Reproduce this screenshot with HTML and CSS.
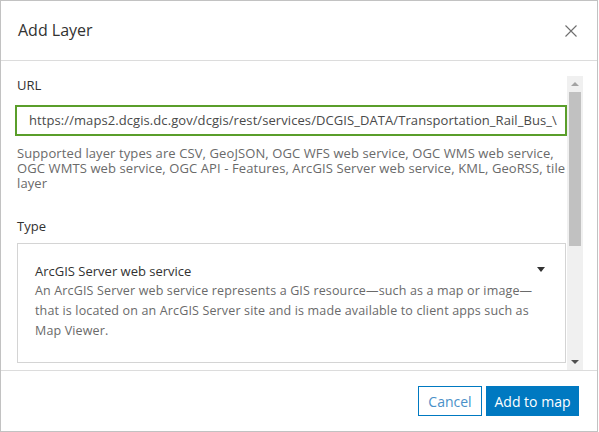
FILE: index.html
```html
<!DOCTYPE html>
<html>
<head>
<meta charset="utf-8">
<link rel="stylesheet" href="styles.css">
</head>
<body>
<div class="dialog">
  <div class="header">
    <h1 class="title">Add Layer</h1>
    <svg class="close" width="12" height="12" viewBox="0 0 12 12"><path d="M0.5 0.5 L11.5 11.5 M11.5 0.5 L0.5 11.5" stroke="#6e6e6e" stroke-width="1.1" fill="none"/></svg>
  </div>
  <div class="body">
    <div class="content">
      <div class="label">URL</div>
      <div class="input">https://maps2.dcgis.dc.gov/dcgis/rest/services/DCGIS_DATA/Transportation_Rail_Bus_\</div>
      <p class="hint">Supported layer types are CSV, GeoJSON, OGC WFS web service, OGC WMS web service, OGC WMTS web service, OGC API - Features, ArcGIS Server web service, KML, GeoRSS, tile layer</p>
      <div class="label type-label">Type</div>
      <div class="select">
        <div class="select-head">
          <span class="select-title">ArcGIS Server web service</span>
          <span class="caret"></span>
        </div>
        <p class="select-desc">An ArcGIS Server web service represents a GIS resource—such as a map or image—that is located on an ArcGIS Server site and is made available to client apps such as Map Viewer.</p>
      </div>
    </div>
    <div class="scrollbar">
      <span class="arrow up"></span>
      <span class="thumb"></span>
      <span class="track-fill"></span>
      <span class="arrow down"></span>
    </div>
  </div>
  <div class="footer">
    <button class="btn btn-outline">Cancel</button>
    <button class="btn btn-primary">Add to map</button>
  </div>
</div>
</body>
</html>
```

FILE: styles.css
```css
html, body {
  margin: 0;
  padding: 0;
  background: #ffffff;
}
body {
  font-family: "Open Sans", "Liberation Sans", sans-serif;
  color: #323232;
}
.dialog {
  box-sizing: border-box;
  width: 598px;
  height: 432px;
  border: 1px solid #c2c2c2;
  display: flex;
  flex-direction: column;
  background: #fff;
}
.header {
  height: 59px;
  border-bottom: 1px solid #dcdcdc;
  display: flex;
  align-items: center;
  justify-content: space-between;
  padding: 0 20px 0 17px;
  flex: none;
}
.title {
  margin: 0;
  font-size: 16px;
  font-weight: 400;
  color: #323232;
  padding-bottom: 1px;
}
.close {
  display: block;
  margin-top: 1px;
}
.body {
  height: 309px;
  flex: none;
  display: flex;
  border-bottom: 1px solid #dcdcdc;
  padding-right: 14px;
  overflow: hidden;
}
.content {
  flex: 1;
  padding: 16px 0 0 16px;
  overflow: hidden;
}
.label {
  font-size: 13px;
  line-height: 16px;
  color: #323232;
}
.input {
  box-sizing: border-box;
  margin: 12px 0 0 -2px;
  height: 31px;
  width: 552px;
  border: 2px solid #5a9e2a;
  padding: 0 0 0 12px;
  font-size: 13px;
  letter-spacing: 0.08px;
  line-height: 27px;
  color: #4a4a4a;
  white-space: nowrap;
  overflow: hidden;
}
.hint {
  margin: 10px 0 0 0;
  font-size: 13px;
  letter-spacing: 0.1px;
  line-height: 15px;
  color: #6a6a6a;
  width: 550px;
}
.type-label {
  margin-top: 27px;
}
.select {
  box-sizing: border-box;
  margin-top: 9px;
  width: 549px;
  border: 1px solid #d4d4d4;
  padding: 18px 20px 21px 17px;
}
.select-head {
  display: flex;
  justify-content: space-between;
  align-items: center;
}
.select-title {
  font-size: 13px;
  line-height: 19px;
  font-weight: 500;
  color: #323232;
}
.caret {
  width: 0;
  height: 0;
  border-left: 4px solid transparent;
  border-right: 4px solid transparent;
  border-top: 5px solid #323232;
  margin-top: -5px;
}
.select-desc {
  margin: 0;
  font-size: 12.5px;
  letter-spacing: 0.15px;
  line-height: 20px;
  color: #6a6a6a;
}
.scrollbar {
  width: 16px;
  margin-top: 15px;
  background: #f0f0f0;
  display: flex;
  flex-direction: column;
  align-items: center;
  flex: none;
}
.arrow {
  display: block;
  width: 0;
  height: 0;
  border-left: 4px solid transparent;
  border-right: 4px solid transparent;
}
.arrow.up {
  border-bottom: 4px solid #a3a3a3;
  margin: 6px 0 6px;
}
.arrow.down {
  border-top: 4px solid #505050;
  margin: 5px 0 6px;
}
.thumb {
  display: block;
  width: 12px;
  height: 154px;
  background: #c1c1c1;
}
.track-fill {
  flex: 1;
}
.footer {
  flex: 1;
  display: flex;
  justify-content: flex-end;
  align-items: flex-start;
  gap: 4px;
  padding: 15px 18px 0 0;
}
.btn {
  box-sizing: border-box;
  height: 30px;
  font-family: "Open Sans", "Liberation Sans", sans-serif;
  font-size: 14px;
  padding: 0;
  border: 1px solid #0079c1;
  cursor: pointer;
}
.btn-outline {
  width: 64px;
  background: #fff;
  color: #4a90c8;
}
.btn-primary {
  width: 93px;
  background: #0079c1;
  color: #fff;
}
```
